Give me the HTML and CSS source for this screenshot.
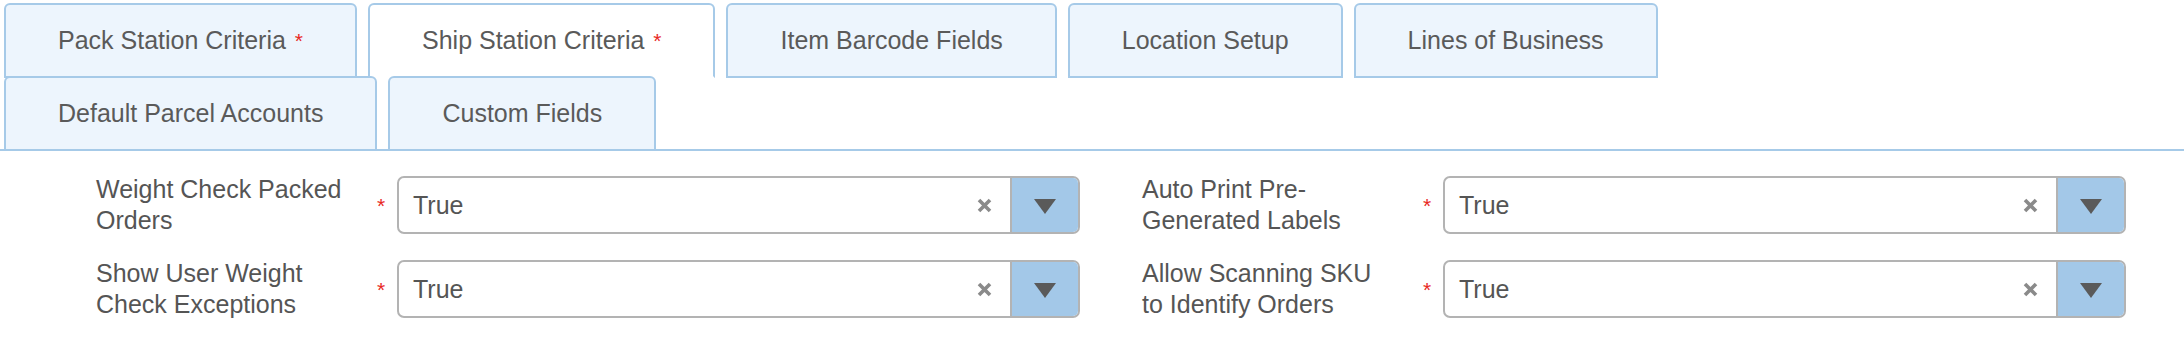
FILE: index.html
```html
<!DOCTYPE html>
<html>
<head>
<meta charset="utf-8">
<title>Station Settings</title>
<link rel="stylesheet" href="styles.css">
</head>
<body>
<div class="tabs">
  <ul class="tab-list">
    <li class="tab">Pack Station Criteria <span class="req">*</span></li>
    <li class="tab active">Ship Station Criteria <span class="req">*</span></li>
    <li class="tab">Item Barcode Fields</li>
    <li class="tab">Location Setup</li>
    <li class="tab">Lines of Business</li>
    <li class="tab">Default Parcel Accounts</li>
    <li class="tab">Custom Fields</li>
  </ul>
  <div class="panel">
    <div class="form">
      <div class="field">
        <label>Weight Check Packed Orders</label>
        <span class="req">*</span>
        <div class="select">
          <span class="value">True</span>
          <span class="clear"><svg width="15" height="15" viewBox="0 0 15 15"><path d="M2 2L13 13M13 2L2 13" /></svg></span>
          <span class="arrow"><svg width="22" height="15" viewBox="0 0 22 15"><polygon points="0,0 22,0 11,15" /></svg></span>
        </div>
      </div>
      <div class="field">
        <label>Auto Print Pre-Generated Labels</label>
        <span class="req">*</span>
        <div class="select">
          <span class="value">True</span>
          <span class="clear"><svg width="15" height="15" viewBox="0 0 15 15"><path d="M2 2L13 13M13 2L2 13" /></svg></span>
          <span class="arrow"><svg width="22" height="15" viewBox="0 0 22 15"><polygon points="0,0 22,0 11,15" /></svg></span>
        </div>
      </div>
      <div class="field">
        <label>Show User Weight Check Exceptions</label>
        <span class="req">*</span>
        <div class="select">
          <span class="value">True</span>
          <span class="clear"><svg width="15" height="15" viewBox="0 0 15 15"><path d="M2 2L13 13M13 2L2 13" /></svg></span>
          <span class="arrow"><svg width="22" height="15" viewBox="0 0 22 15"><polygon points="0,0 22,0 11,15" /></svg></span>
        </div>
      </div>
      <div class="field">
        <label>Allow Scanning SKU to Identify Orders</label>
        <span class="req">*</span>
        <div class="select">
          <span class="value">True</span>
          <span class="clear"><svg width="15" height="15" viewBox="0 0 15 15"><path d="M2 2L13 13M13 2L2 13" /></svg></span>
          <span class="arrow"><svg width="22" height="15" viewBox="0 0 22 15"><polygon points="0,0 22,0 11,15" /></svg></span>
        </div>
      </div>
    </div>
  </div>
</div>
</body>
</html>
```

FILE: styles.css
```css
body {margin: 0; background: #fff; color: #555; font-family: "Liberation Sans", Helvetica, Arial, sans-serif; font-size: 25px;}
.tab-list {display: flex; flex-wrap: wrap; max-width: 1700px; margin: 0; padding: 3px 0 0 4px; list-style: none;}
.tab {box-sizing: border-box; height: 75px; display: flex; align-items: center; padding: 0 52px; margin: 0 11px -2px 0; border: 2px solid #a6cae8; border-radius: 6px 6px 0 0; background: #edf5fd; color: #5a5a5a; white-space: pre;}
.tab.active {background: #fff; border-bottom-color: transparent;}
.req {color: #e8281f; font-size: 21px;}
.tab .req {margin-left: 2px; vertical-align: -5px;}
.panel {border-top: 2px solid #a6cae8;}
.form {display: grid; grid-template-columns: 984px 984px; column-gap: 62px; row-gap: 22px; padding: 23px 0 0 96px;}
.field {display: flex; align-items: center;}
.field label {width: 250px; line-height: 31px;}
.field .req {width: 12px; margin-left: 29px; padding-top: 1px; text-align: center; line-height: 21px;}
.select {box-sizing: border-box; width: 683px; height: 58px; margin-left: 10px; display: flex; align-items: stretch; border: 2px solid #b3b3b3; border-radius: 7px; overflow: hidden;}
.select .value {flex: 1; display: flex; align-items: center; padding-left: 14px;}
.select .clear {display: flex; align-items: center; margin-right: 18px;}
.select .clear path {stroke: #8a8a8a; stroke-width: 3.6; fill: none;}
.select .arrow {width: 66px; display: flex; align-items: center; justify-content: center; padding-top: 2px; border-left: 2px solid #b3b3b3; background: #a3c8e8;}
.select .arrow polygon {fill: #5a5a5a;}
```
